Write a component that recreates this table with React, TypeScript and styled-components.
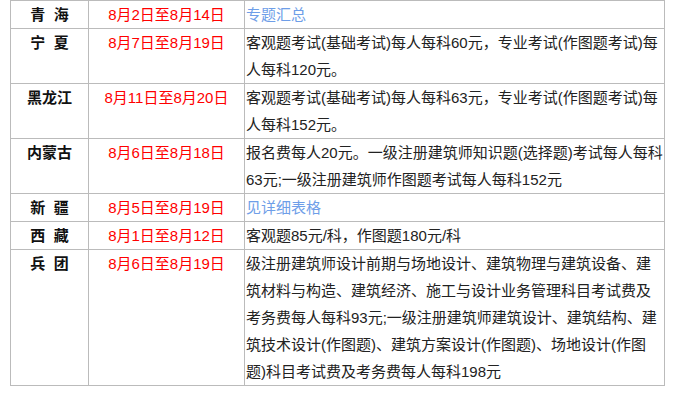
import React from "react";
import styled, { createGlobalStyle } from "styled-components";

const Global = createGlobalStyle`
  html, body { margin: 0; padding: 0; background: #fff; }
  body { font-family: "Liberation Sans", "Noto Sans CJK SC", sans-serif; }
`;

const Table = styled.table`
  margin-left: 10px;
  width: 655px;
  border-collapse: collapse;
  table-layout: fixed;
  font-size: 15px;
  line-height: 27px;
`;

const Cell = styled.td<{ $kind: "region" | "date" | "info" }>`
  border: 1px solid #bbbbbb;
  padding: 0 ${(p) => (p.$kind === "info" ? "0 0 1px" : "0")};
  vertical-align: top;
  text-align: ${(p) => (p.$kind === "info" ? "left" : "center")};
  font-weight: ${(p) => (p.$kind === "region" ? "bold" : "normal")};
  color: ${(p) => (p.$kind === "date" ? "#ff0000" : p.$kind === "region" ? "#111" : "#222")};
  word-break: break-all;
`;

const Link = styled.a`
  color: #6e9ee8;
  text-decoration: none;
`;

type Row = { region: string; date: string; info: React.ReactNode };

const rows: Row[] = [
  { region: "青\u00a0\u00a0海", date: "8月2日至8月14日", info: <Link href="#">专题汇总</Link> },
  {
    region: "宁\u00a0\u00a0夏",
    date: "8月7日至8月19日",
    info: "客观题考试(基础考试)每人每科60元，专业考试(作图题考试)每人每科120元。",
  },
  {
    region: "黑龙江",
    date: "8月11日至8月20日",
    info: "客观题考试(基础考试)每人每科63元，专业考试(作图题考试)每人每科152元。",
  },
  {
    region: "内蒙古",
    date: "8月6日至8月18日",
    info: "报名费每人20元。一级注册建筑师知识题(选择题)考试每人每科63元;一级注册建筑师作图题考试每人每科152元",
  },
  { region: "新\u00a0\u00a0疆", date: "8月5日至8月19日", info: <Link href="#">见详细表格</Link> },
  { region: "西\u00a0\u00a0藏", date: "8月1日至8月12日", info: "客观题85元/科，作图题180元/科" },
  {
    region: "兵\u00a0\u00a0团",
    date: "8月6日至8月19日",
    info: "级注册建筑师设计前期与场地设计、建筑物理与建筑设备、建筑材料与构造、建筑经济、施工与设计业务管理科目考试费及考务费每人每科93元;一级注册建筑师建筑设计、建筑结构、建筑技术设计(作图题)、建筑方案设计(作图题)、场地设计(作图题)科目考试费及考务费每人每科198元",
  },
];

export default function App() {
  return (
    <>
      <Global />
      <Table>
        <colgroup>
          <col style={{ width: 78 }} />
          <col style={{ width: 156 }} />
          <col />
        </colgroup>
        <tbody>
          {rows.map((r) => (
            <tr key={r.region}>
              <Cell $kind="region">{r.region}</Cell>
              <Cell $kind="date">{r.date}</Cell>
              <Cell $kind="info">{r.info}</Cell>
            </tr>
          ))}
        </tbody>
      </Table>
    </>
  );
}
